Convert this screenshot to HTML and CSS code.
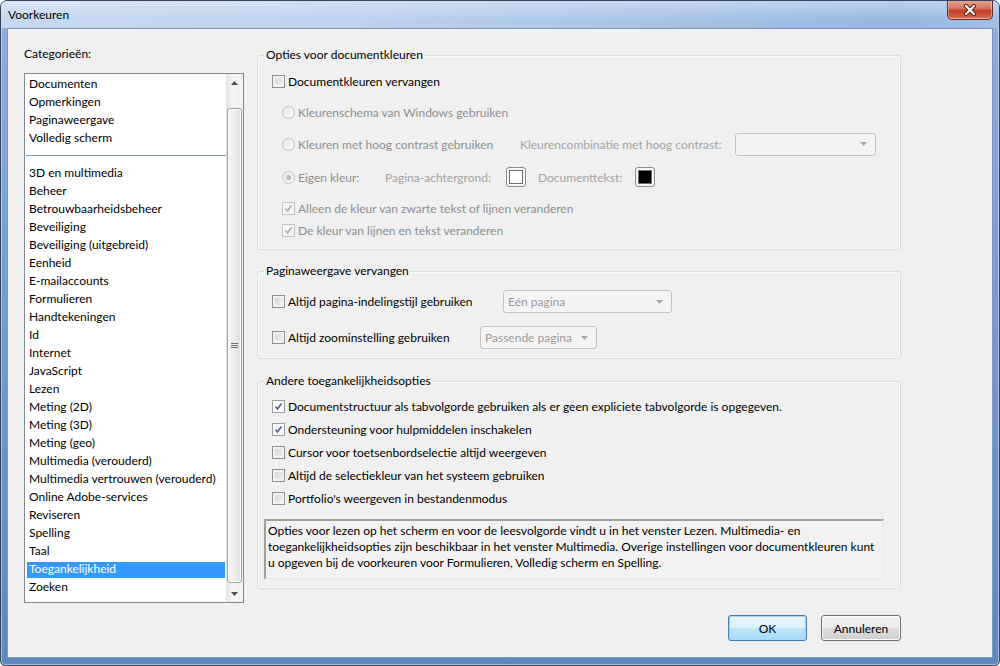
FILE: index.html
```html
<!DOCTYPE html>
<html lang="nl">
<head>
  <meta charset="UTF-8">
  <title>Voorkeuren</title>
  <link rel="stylesheet" href="styles.css">
</head>
<body>
  <div class="window">
    <div class="titlebar">
      <span class="title">Voorkeuren</span>
      <div class="close-button">
        <svg width="14" height="12" viewBox="0 0 14 12">
          <path d="M3 2 L11 10 M11 2 L3 10" stroke="#5a1a10" stroke-width="4" stroke-linecap="round"/>
          <path d="M3 2 L11 10 M11 2 L3 10" stroke="#fff" stroke-width="2.2" stroke-linecap="round"/>
        </svg>
      </div>
    </div>

    <div class="client">
      <div class="categories">
        <div class="categories-label">Categorieën:</div>
        <div class="listbox">
          <ul class="list">
            <li>Documenten</li>
            <li>Opmerkingen</li>
            <li>Paginaweergave</li>
            <li>Volledig scherm</li>
            <li class="separator"></li>
            <li>3D en multimedia</li>
            <li>Beheer</li>
            <li>Betrouwbaarheidsbeheer</li>
            <li>Beveiliging</li>
            <li>Beveiliging (uitgebreid)</li>
            <li>Eenheid</li>
            <li>E-mailaccounts</li>
            <li>Formulieren</li>
            <li>Handtekeningen</li>
            <li>Id</li>
            <li>Internet</li>
            <li>JavaScript</li>
            <li>Lezen</li>
            <li>Meting (2D)</li>
            <li>Meting (3D)</li>
            <li>Meting (geo)</li>
            <li>Multimedia (verouderd)</li>
            <li>Multimedia vertrouwen (verouderd)</li>
            <li>Online Adobe-services</li>
            <li>Reviseren</li>
            <li>Spelling</li>
            <li>Taal</li>
            <li class="selected">Toegankelijkheid</li>
            <li>Zoeken</li>
          </ul>
          <div class="scrollbar">
            <div class="scroll-arrow">
              <svg width="7" height="4" viewBox="0 0 7 4"><path d="M0 4 L3.5 0 L7 4 Z" fill="#4d4d4d"/></svg>
            </div>
            <div class="scroll-track">
              <div class="scroll-thumb">
                <svg width="7" height="6" viewBox="0 0 7 6"><path d="M0 0.5 H7 M0 2.5 H7 M0 4.5 H7" stroke="#6e6e6e" stroke-width="1"/></svg>
              </div>
            </div>
            <div class="scroll-arrow">
              <svg width="7" height="4" viewBox="0 0 7 4"><path d="M0 0 L3.5 4 L7 0 Z" fill="#4d4d4d"/></svg>
            </div>
          </div>
        </div>
      </div>

      <div class="settings">
        <div class="group group-colors">
          <div class="group-title">Opties voor documentkleuren</div>
          <div class="row row-1">
            <span class="check"></span>
            <span>Documentkleuren vervangen</span>
          </div>
          <div class="row row-2 indent disabled">
            <span class="radio"></span>
            <span>Kleurenschema van Windows gebruiken</span>
          </div>
          <div class="row row-3 indent disabled">
            <span class="radio"></span>
            <span class="label-contrast">Kleuren met hoog contrast gebruiken</span>
            <span class="label-combination">Kleurencombinatie met hoog contrast:</span>
            <div class="dropdown dropdown-contrast">
              <span></span>
              <svg width="7" height="4" viewBox="0 0 7 4"><path d="M0 0 L3.5 4 L7 0 Z" fill="#a8a8a8"/></svg>
            </div>
          </div>
          <div class="row row-4 indent disabled">
            <span class="radio selected"></span>
            <span class="label-own">Eigen kleur:</span>
            <span class="label-page">Pagina-achtergrond:</span>
            <span class="swatch"><span class="swatch-color white"></span></span>
            <span class="label-text">Documenttekst:</span>
            <span class="swatch"><span class="swatch-color black"></span></span>
          </div>
          <div class="row row-5 indent disabled">
            <span class="check checked">
              <svg width="9" height="9" viewBox="0 0 9 9"><path d="M1.5 4.5 L3.5 7 L7.5 1.5" fill="none" stroke="#a9a9a9" stroke-width="1.6"/></svg>
            </span>
            <span>Alleen de kleur van zwarte tekst of lijnen veranderen</span>
          </div>
          <div class="row row-6 indent disabled">
            <span class="check checked">
              <svg width="9" height="9" viewBox="0 0 9 9"><path d="M1.5 4.5 L3.5 7 L7.5 1.5" fill="none" stroke="#a9a9a9" stroke-width="1.6"/></svg>
            </span>
            <span>De kleur van lijnen en tekst veranderen</span>
          </div>
        </div>

        <div class="group group-page">
          <div class="group-title">Paginaweergave vervangen</div>
          <div class="row row-layout">
            <span class="check"></span>
            <span class="label-layout">Altijd pagina-indelingstijl gebruiken</span>
            <div class="dropdown dropdown-layout">
              <span>Eén pagina</span>
              <svg width="7" height="4" viewBox="0 0 7 4"><path d="M0 0 L3.5 4 L7 0 Z" fill="#a8a8a8"/></svg>
            </div>
          </div>
          <div class="row row-zoom">
            <span class="check"></span>
            <span class="label-zoom">Altijd zoominstelling gebruiken</span>
            <div class="dropdown dropdown-zoom">
              <span>Passende pagina</span>
              <svg width="7" height="4" viewBox="0 0 7 4"><path d="M0 0 L3.5 4 L7 0 Z" fill="#a8a8a8"/></svg>
            </div>
          </div>
        </div>

        <div class="group group-access">
          <div class="group-title">Andere toegankelijkheidsopties</div>
          <div class="options">
            <div class="row">
              <span class="check checked">
                <svg width="9" height="9" viewBox="0 0 9 9"><path d="M1.5 4.5 L3.5 7 L7.5 1.5" fill="none" stroke="#4c5f8c" stroke-width="1.6"/></svg>
              </span>
              <span>Documentstructuur als tabvolgorde gebruiken als er geen expliciete tabvolgorde is opgegeven.</span>
            </div>
            <div class="row">
              <span class="check checked">
                <svg width="9" height="9" viewBox="0 0 9 9"><path d="M1.5 4.5 L3.5 7 L7.5 1.5" fill="none" stroke="#4c5f8c" stroke-width="1.6"/></svg>
              </span>
              <span>Ondersteuning voor hulpmiddelen inschakelen</span>
            </div>
            <div class="row">
              <span class="check"></span>
              <span>Cursor voor toetsenbordselectie altijd weergeven</span>
            </div>
            <div class="row">
              <span class="check"></span>
              <span>Altijd de selectiekleur van het systeem gebruiken</span>
            </div>
            <div class="row">
              <span class="check"></span>
              <span>Portfolio's weergeven in bestandenmodus</span>
            </div>
          </div>
          <div class="info-box">
            Opties voor lezen op het scherm en voor de leesvolgorde vindt u in het venster Lezen. Multimedia- en<br>
            toegankelijkheidsopties zijn beschikbaar in het venster Multimedia. Overige instellingen voor documentkleuren kunt<br>
            u opgeven bij de voorkeuren voor Formulieren, Volledig scherm en Spelling.
          </div>
        </div>

        <div class="buttons">
          <button class="button default">OK</button>
          <button class="button">Annuleren</button>
        </div>
      </div>
    </div>
  </div>
</body>
</html>
```

FILE: styles.css
```css
* {
  box-sizing: border-box;
}

body {
  margin: 0;
  font-family: Lato, "Noto Sans", sans-serif;
  font-size: 12px;
  color: #000;
  background: #fff;
}

.window {
  width: 1000px;
  height: 666px;
  display: flex;
  flex-direction: column;
  border: 1px solid #34445c;
  border-radius: 7px 7px 5px 5px;
  background: linear-gradient(to bottom, #8fb0dc 0%, #6f95cc 60%, #5f88c3 100%);
  box-shadow: inset 0 0 0 1px rgba(255, 255, 255, 0.45);
  overflow: hidden;
}

.titlebar {
  height: 27px;
  display: flex;
  align-items: flex-start;
  background:
    linear-gradient(to bottom, rgba(255, 255, 255, 0.35), rgba(255, 255, 255, 0) 70%),
    linear-gradient(to right, #c6d9f1 0%, #bcd2ee 35%, #a9c3e6 65%, #98b8e0 90%, #a3c0e6 100%);
}

.title {
  margin: 6px 0 0 7px;
  line-height: 16px;
  font-size: 12px;
  color: #000;
}

.close-button {
  margin: -1px 6px 0 auto;
  width: 46px;
  height: 20px;
  display: flex;
  align-items: center;
  justify-content: center;
  border: 1px solid #6b2a20;
  border-top: none;
  border-radius: 0 0 5px 5px;
  background: linear-gradient(to bottom, #e8a593 0%, #d8735e 45%, #c2412a 55%, #cf5a3c 85%, #e0896a 100%);
  box-shadow: inset 0 0 0 1px rgba(255, 255, 255, 0.35);
}

.client {
  height: 630px;
  margin: 0 6px;
  display: flex;
  gap: 13px;
  padding: 0 0 0 16px;
  background: #f0f0f0;
  border: 1px solid #7f97bb;
}

/* left column */

.categories {
  width: 220px;
  padding-top: 17px;
}

.categories-label {
  line-height: 16px;
  margin-bottom: 11px;
}

.listbox {
  height: 530px;
  display: flex;
  border: 1px solid #828790;
  background: #fff;
}

.list {
  flex: 1;
  margin: 0;
  padding: 1px 1px 0 2px;
  list-style: none;
}

.list li {
  height: 18px;
  line-height: 18px;
  padding-left: 2px;
  white-space: nowrap;
}

.list li.separator {
  height: 17px;
  margin: 0 -1px 0 -1px;
  background: linear-gradient(#6b9fd6, #6b9fd6) no-repeat 0 8px / 100% 1px;
}

.list li.selected {
  background: linear-gradient(transparent 2px, #3399ff 2px);
  color: #fff;
}

.scrollbar {
  width: 17px;
  display: flex;
  flex-direction: column;
  background: linear-gradient(to right, #e3e3e3, #f5f5f5 40%, #f0f0f0);
}

.scroll-arrow {
  height: 17px;
  display: flex;
  align-items: center;
  justify-content: center;
}

.scroll-track {
  flex: 1;
  padding: 17px 0 2px;
}

.scroll-thumb {
  height: 100%;
  margin: 0 1px;
  display: flex;
  align-items: center;
  justify-content: center;
  border: 1px solid #a1a1a1;
  border-radius: 3px;
  background: linear-gradient(to right, #f6f6f6, #ececec 50%, #dcdcdc);
  box-shadow: inset 0 0 0 1px #fbfbfb;
}

/* right column */

.settings {
  width: 644px;
  padding-top: 26px;
  display: flex;
  flex-direction: column;
}

.group {
  border: 1px solid #d5dfe5;
  border-radius: 3px;
  box-shadow: inset 0 0 0 1px #fafafa;
  padding: 0 0 0 14px;
}

.group-title {
  width: fit-content;
  margin: -9px 0 0 -8px;
  padding: 0 2px;
  line-height: 16px;
  background: #f0f0f0;
}

.row {
  display: flex;
  align-items: center;
  height: 22px;
  white-space: nowrap;
}

.row.indent {
  padding-left: 10px;
}

.disabled {
  color: #8d8d8d;
}

.group-colors {
  height: 195px;
}

.row-1 {
  margin-top: 7px;
}

.row-2 {
  margin-top: 9px;
}

.row-3 {
  margin-top: 9px;
  height: 24px;
}

.row-4 {
  margin-top: 10px;
}

.row-5 {
  margin-top: 9px;
}

.check {
  flex: none;
  width: 13px;
  height: 13px;
  margin-right: 3px;
  display: flex;
  align-items: center;
  justify-content: center;
  border: 1px solid #8e8f8f;
  background: linear-gradient(135deg, #cdd1d6, #f4f4f4);
  box-shadow: inset 0 0 0 2px #f3f3f3;
}

.check.checked {
  background: #fdfdfd;
  box-shadow: none;
  border-color: #9a9ea4;
}

.disabled .check {
  border-color: #c4c4c4;
  background: #f6f6f6;
}

.radio {
  flex: none;
  width: 13px;
  height: 13px;
  margin-right: 3px;
  display: flex;
  align-items: center;
  justify-content: center;
  border: 1px solid #c2c2c2;
  border-radius: 50%;
  background: linear-gradient(135deg, #e6e6e6, #fafafa);
}

.radio.selected::after {
  content: "";
  width: 5px;
  height: 5px;
  border-radius: 50%;
  background: radial-gradient(circle at 40% 40%, #d0d0d0, #9a9a9a);
}

.label-contrast {
  width: 222px;
}

.label-combination {
  width: 215px;
  color: #a3a3a3;
}

.label-own {
  width: 87px;
}

.label-page {
  width: 121px;
  color: #a3a3a3;
}

.label-text {
  width: 97px;
  margin-left: 12px;
  color: #a3a3a3;
}

.swatch {
  width: 20px;
  height: 20px;
  display: flex;
  align-items: center;
  justify-content: center;
  border: 1px solid #8a8a8a;
  border-radius: 3px;
  background: #f7f7f7;
}

.swatch-color {
  width: 14px;
  height: 14px;
  border: 1px solid #6e6e6e;
}

.swatch-color.white {
  background: #fff;
}

.swatch-color.black {
  background: #000;
}

.dropdown {
  height: 23px;
  display: flex;
  align-items: center;
  justify-content: space-between;
  padding: 0 8px 0 4px;
  border: 1px solid #c3c3c3;
  border-radius: 3px;
  background: #f4f4f4;
  color: #9a9a9a;
}

.dropdown-contrast {
  width: 141px;
}

.group-page {
  margin-top: 21px;
  height: 88px;
}

.row-layout {
  margin-top: 11px;
  height: 23px;
}

.row-zoom {
  margin-top: 13px;
  height: 23px;
}

.label-layout {
  width: 215px;
}

.dropdown-layout {
  width: 169px;
}

.label-zoom {
  width: 192px;
}

.dropdown-zoom {
  width: 117px;
}

.group-access {
  margin-top: 22px;
  height: 208px;
}

.options {
  margin-top: 6px;
}

.options .row {
  height: 23px;
}

.info-box {
  width: 620px;
  height: 60px;
  margin: 9px 0 0 -8px;
  padding: 2px 2px 0 2px;
  line-height: 16px;
  white-space: nowrap;
  border-top: 2px solid #a0a0a0;
  border-left: 2px solid #a0a0a0;
  border-right: 1px solid #e6e6e6;
  border-bottom: 1px solid #e6e6e6;
  background: #f2f2f2;
}

.buttons {
  margin-top: 26px;
  display: flex;
  justify-content: flex-end;
  gap: 14px;
}

.button {
  width: 80px;
  height: 26px;
  padding: 0;
  font-family: inherit;
  font-size: 12px;
  color: #000;
  border: 1px solid #707070;
  border-radius: 3px;
  background: linear-gradient(to bottom, #f2f2f2 0%, #ebebeb 48%, #dddddd 52%, #cfcfcf 100%);
  box-shadow: inset 0 0 0 1px #fbfbfb;
}

.button.default {
  width: 79px;
  border-color: #3c7fb1;
  background: linear-gradient(to bottom, #eaf6fd 0%, #d9f0fc 48%, #bee6fd 52%, #a7d9f5 100%);
  box-shadow: inset 0 0 0 1px #9fd8f8;
}
```
